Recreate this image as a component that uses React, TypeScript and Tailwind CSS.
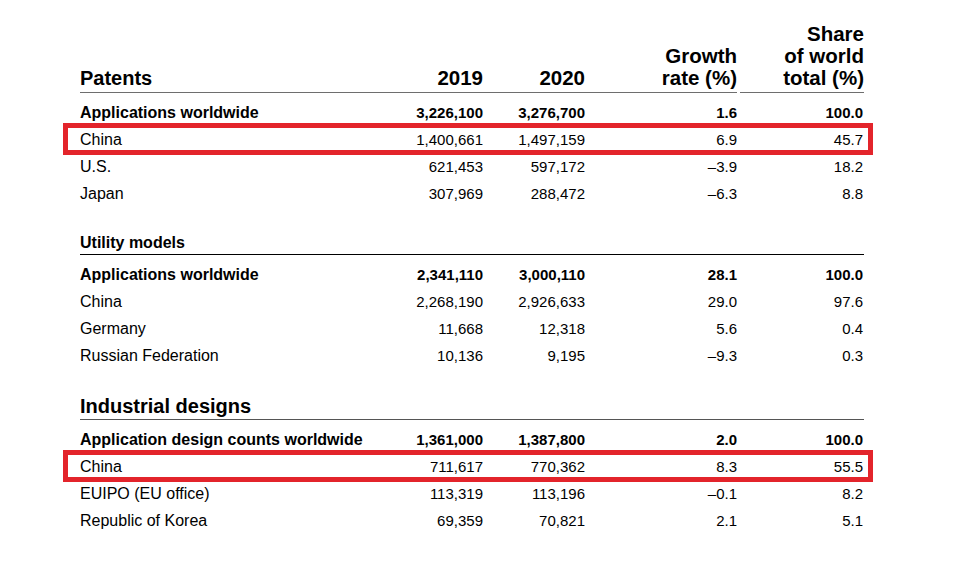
type Row = {
  label: string;
  y2019: string;
  y2020: string;
  growth: string;
  share: string;
  bold?: boolean;
  highlight?: boolean;
};

const patents: Row[] = [
  { label: "Applications worldwide", y2019: "3,226,100", y2020: "3,276,700", growth: "1.6", share: "100.0", bold: true },
  { label: "China", y2019: "1,400,661", y2020: "1,497,159", growth: "6.9", share: "45.7", highlight: true },
  { label: "U.S.", y2019: "621,453", y2020: "597,172", growth: "–3.9", share: "18.2" },
  { label: "Japan", y2019: "307,969", y2020: "288,472", growth: "–6.3", share: "8.8" },
];

const utility: Row[] = [
  { label: "Applications worldwide", y2019: "2,341,110", y2020: "3,000,110", growth: "28.1", share: "100.0", bold: true },
  { label: "China", y2019: "2,268,190", y2020: "2,926,633", growth: "29.0", share: "97.6" },
  { label: "Germany", y2019: "11,668", y2020: "12,318", growth: "5.6", share: "0.4" },
  { label: "Russian Federation", y2019: "10,136", y2020: "9,195", growth: "–9.3", share: "0.3" },
];

const designs: Row[] = [
  { label: "Application design counts worldwide", y2019: "1,361,000", y2020: "1,387,800", growth: "2.0", share: "100.0", bold: true },
  { label: "China", y2019: "711,617", y2020: "770,362", growth: "8.3", share: "55.5", highlight: true },
  { label: "EUIPO (EU office)", y2019: "113,319", y2020: "113,196", growth: "–0.1", share: "8.2" },
  { label: "Republic of Korea", y2019: "69,359", y2020: "70,821", growth: "2.1", share: "5.1" },
];

const cols = "grid grid-cols-[1fr_100px_102px_152px_127px]";

function DataRow({ row }: { row: Row }) {
  return (
    <div
      className={`relative ${cols} h-[27px] items-center text-[15px] leading-[27px] text-black ${
        row.bold ? "font-bold" : ""
      }`}
    >
      {/* red highlight box */}
      {row.highlight && (
        <span className="pointer-events-none absolute -left-[17px] -right-[9px] -top-[3px] -bottom-[2px] border-[5px] border-[#e3242b]" />
      )}
      <span className="text-[16px]">{row.label}</span>
      <span className="text-right">{row.y2019}</span>
      <span className="text-right">{row.y2020}</span>
      <span className="text-right">{row.growth}</span>
      <span className="pr-[1px] text-right">{row.share}</span>
    </div>
  );
}

export default function App() {
  return (
    <div className="min-h-screen w-full bg-white font-['Liberation_Sans',Arial,sans-serif]">
      <div className="ml-[80px] w-[784px] pt-[23px]">
        {/* Patents header */}
        <div className={`${cols} items-end text-[20.5px] font-bold leading-[22px] text-black`}>
          <div className="border-b-[1.5px] border-[#6e6e6e] pb-[3px] text-[20px]">Patents</div>
          <div className="border-b-[1.5px] border-[#6e6e6e] pb-[3px] text-right">2019</div>
          <div className="border-b-[1.5px] border-[#6e6e6e] pb-[3px] text-right">2020</div>
          <div className="border-b-[1.5px] border-[#6e6e6e] pb-[3px] text-right">
            Growth
            <br />
            rate (%)
          </div>
          <div className="ml-[3px] border-b-[1.5px] border-[#6e6e6e] pb-[3px] text-right">
            Share
            <br />
            of world
            <br />
            total (%)
          </div>
        </div>
        <div className="pt-[6px]">
          {patents.map((r) => (
            <DataRow key={r.label} row={r} />
          ))}
        </div>

        {/* Utility models */}
        <div className="mt-[26px] border-b-[1.5px] border-black pb-[1px] text-[16px] font-bold leading-[20px] text-black">
          Utility models
        </div>
        <div className="pt-[6px]">
          {utility.map((r) => (
            <DataRow key={r.label} row={r} />
          ))}
        </div>

        {/* Industrial designs */}
        <div className="mt-[25px] border-b-[1.5px] border-[#555] pb-[1px] text-[20px] font-bold leading-[24px] text-black">
          Industrial designs
        </div>
        <div className="pt-[6px]">
          {designs.map((r) => (
            <DataRow key={r.label} row={r} />
          ))}
        </div>
      </div>
    </div>
  );
}
